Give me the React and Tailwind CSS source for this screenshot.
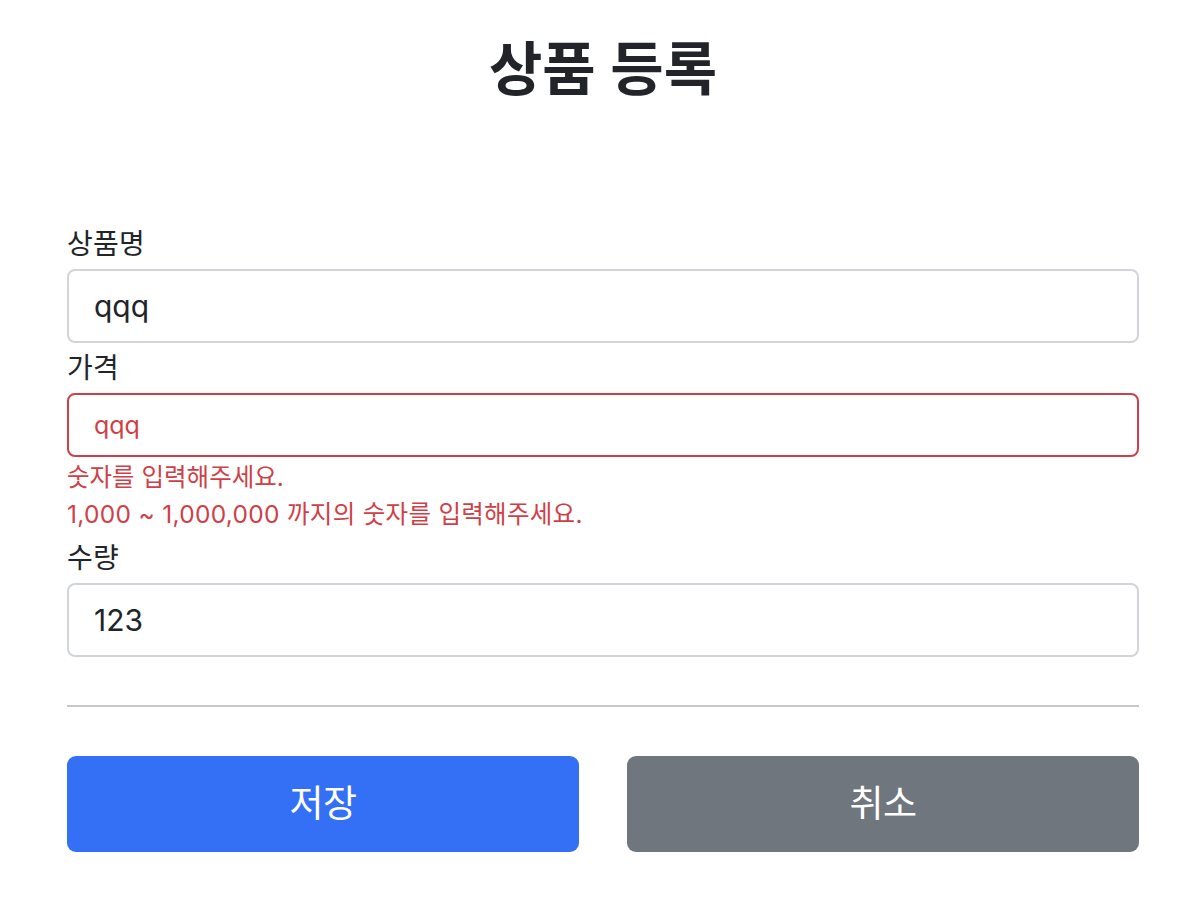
import React from "react";

const FONT = { fontFamily: 'Inter, "Noto Sans CJK KR", sans-serif' };

export default function App() {
  return (
    <div className="min-h-[898px] w-full bg-white text-[#212529]" style={FONT}>
      <div className="mx-auto w-[1072px] translate-x-[1px] pt-[36px]">
        <div className="text-center">
          <h2 className="text-[58px] leading-[67px] font-semibold">상품 등록</h2>
        </div>

        <form className="mt-[116px]" onSubmit={(e) => e.preventDefault()}>
          <div>
            <label className="block text-[28px] leading-[50px] tracking-[0.3px]">상품명</label>
            <input
              readOnly
              value="qqq"
              className="block w-full h-[74px] rounded-[8px] border-2 border-[#d1d5d9] bg-white px-[25px] text-[30px] text-[#212529] outline-none"
            />
          </div>
          <div>
            <label className="block text-[28px] leading-[50px] tracking-[0.3px]">가격</label>
            <input
              readOnly
              value="qqq"
              className="block w-full h-[64px] rounded-[8px] border-2 border-[#cf3f48] bg-white px-[25px] text-[25px] text-[#cf3f48] outline-none"
            />
            <div className="pt-[2px] text-[24.5px] leading-[37px] text-[#cf3f48]">
              <div>숫자를 입력해주세요.</div>
              <div className="tracking-[0.3px]">1,000 ~ 1,000,000 까지의 숫자를 입력해주세요.</div>
            </div>
          </div>
          <div>
            <label className="block text-[28px] leading-[50px] tracking-[0.3px]">수량</label>
            <input
              readOnly
              value="123"
              className="block w-full h-[74px] rounded-[8px] border-2 border-[#d1d5d9] bg-white px-[25px] text-[30px] text-[#212529] outline-none"
            />
          </div>

          <hr className="mt-[48px] border-0 h-[2px] bg-[#c8c8c8]" />

          <div className="mt-[49px] grid grid-cols-2 gap-[48px]">
            <button
              type="button"
              className="h-[96px] rounded-[9px] bg-[#3370f5] text-white text-[37px] tracking-[-0.5px]"
            >
              저장
            </button>
            <button
              type="button"
              className="h-[96px] rounded-[9px] bg-[#70767d] text-white text-[37px] tracking-[-0.5px]"
            >
              취소
            </button>
          </div>
        </form>
      </div>
    </div>
  );
}
